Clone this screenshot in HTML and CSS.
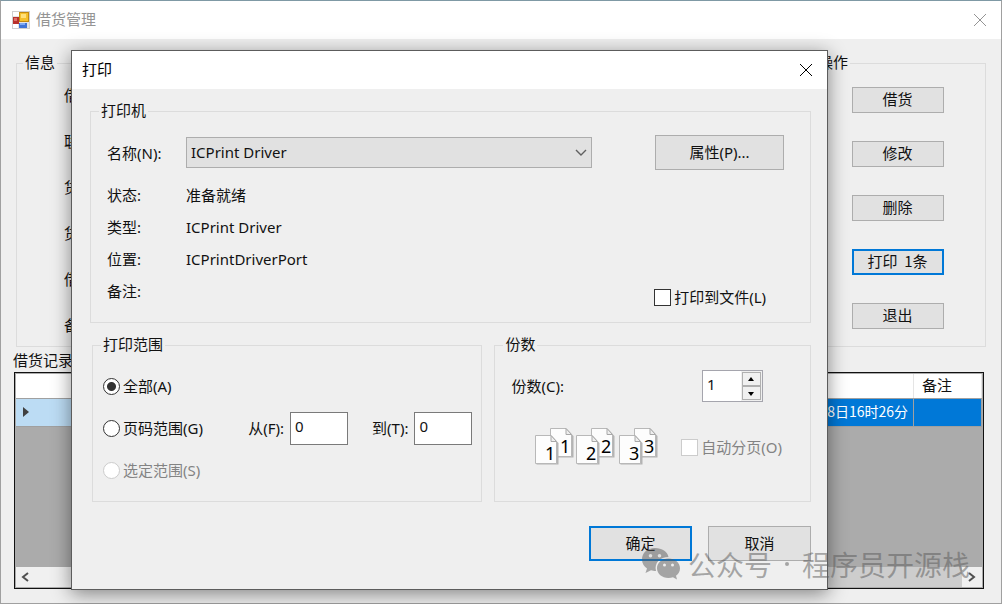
FILE: index.html
```html
<!DOCTYPE html>
<html lang="zh-CN">
<head>
<meta charset="utf-8">
<title>借货管理</title>
<link rel="stylesheet" href="styles.css">
</head>
<body>
<main class="window">
  <header class="titlebar titlebar-inactive">
    <svg class="app-icon" width="18" height="18" viewBox="0 0 18 18" aria-hidden="true">
      <rect x="0.5" y="0.5" width="17" height="17" fill="#e4e4e4" stroke="#cfcfcf"/>
      <rect x="1" y="1" width="6" height="4" fill="#fff"/>
      <rect x="1" y="13" width="5" height="4" fill="#fff"/>
      <rect x="1" y="6" width="6" height="7" fill="#b8302c"/>
      <rect x="2" y="7" width="3" height="3" fill="#dd7068"/>
      <rect x="7.500" y="1.500" width="9" height="9" fill="#f5c02c" stroke="#c28a10"/>
      <rect x="9" y="3" width="5" height="4" fill="#ffe07a"/>
      <rect x="7" y="12" width="8" height="5" fill="#3f74d8"/>
      <rect x="8" y="12" width="5" height="2" fill="#7fa9f2"/>
    </svg>
    <h1 class="title">借货管理</h1>
    <button class="close" type="button" aria-label="关闭窗口">
      <svg width="14" height="14" viewBox="0 0 14 14"><path d="M1 1L13 13M13 1L1 13" fill="none" stroke="currentColor"/></svg>
    </button>
  </header>
  <div class="client">
    <div class="groups">
      <fieldset class="group info">
        <legend>信息</legend>
        <div class="info-list">
          <span>借</span><span>联</span><span>货</span><span>货</span><span>借</span><span>备</span>
        </div>
      </fieldset>
      <fieldset class="group actions">
        <legend>操作</legend>
        <div class="action-list">
          <button class="btn btn-small" type="button">借货</button>
          <button class="btn btn-small" type="button">修改</button>
          <button class="btn btn-small" type="button">删除</button>
          <button class="btn btn-small btn-default" type="button">打印&nbsp; 1条</button>
          <button class="btn btn-small" type="button">退出</button>
        </div>
      </fieldset>
    </div>
    <h2 class="records-title">借货记录</h2>
    <div class="records">
      <table class="table">
        <thead>
          <tr><th class="col-mark"></th><th></th><th class="col-note">备注</th></tr>
        </thead>
        <tbody>
          <tr>
            <td class="mark"><svg width="8" height="12" viewBox="0 0 8 12"><path d="M1 1L7 6L1 11Z" fill="#404040"/></svg></td>
            <td class="time">8日16时26分</td>
            <td></td>
          </tr>
        </tbody>
      </table>
      <div class="scrollbar">
        <button class="scroll-btn" type="button" aria-label="向左滚动"><svg width="10" height="10" viewBox="0 0 10 10"><path d="M7 1L2 5L7 9" fill="none" stroke="#505050" stroke-width="2"/></svg></button>
        <div class="scroll-track"><div class="scroll-thumb"></div></div>
        <button class="scroll-btn" type="button" aria-label="向右滚动"><svg width="10" height="10" viewBox="0 0 10 10"><path d="M2 1L7 5L2 9" fill="none" stroke="#505050" stroke-width="2"/></svg></button>
      </div>
    </div>
  </div>
</main>

<section class="dialog" role="dialog" aria-labelledby="dialog-title">
  <header class="titlebar">
    <h2 class="title" id="dialog-title">打印</h2>
    <button class="close" type="button" aria-label="关闭">
      <svg width="14" height="14" viewBox="0 0 14 14"><path d="M1 1L13 13M13 1L1 13" fill="none" stroke="currentColor"/></svg>
    </button>
  </header>
  <form class="dialog-body">
    <fieldset class="group printer">
      <legend>打印机</legend>
      <div class="printer-top">
        <label class="key" for="printer">名称(N):</label>
        <div class="select-wrap">
          <select class="select" id="printer"><option>ICPrint Driver</option></select>
          <svg class="chevron" width="12" height="8" viewBox="0 0 12 8" aria-hidden="true"><path d="M1 1L6 6L11 1" fill="none" stroke="#606060" stroke-width="1.400"/></svg>
        </div>
        <button class="btn btn-props" type="button">属性(P)...</button>
      </div>
      <div class="printer-bottom">
        <dl class="details">
          <dt>状态:</dt><dd>准备就绪</dd>
          <dt>类型:</dt><dd>ICPrint Driver</dd>
          <dt>位置:</dt><dd>ICPrintDriverPort</dd>
          <dt>备注:</dt><dd></dd>
        </dl>
        <label class="choice to-file"><input class="check" type="checkbox">打印到文件(L)</label>
      </div>
    </fieldset>
    <div class="lower">
      <fieldset class="group range">
        <legend>打印范围</legend>
        <div class="range-row">
          <label class="choice"><input class="radio" type="radio" name="range" checked>全部(A)</label>
        </div>
        <div class="range-row">
          <label class="choice"><input class="radio" type="radio" name="range">页码范围(G)</label>
          <div class="pages">
            <label class="page">从(F):<input class="field" type="text" value="0"></label>
            <label class="page">到(T):<input class="field" type="text" value="0"></label>
          </div>
        </div>
        <div class="range-row">
          <label class="choice choice-off"><input class="radio" type="radio" name="range" disabled>选定范围(S)</label>
        </div>
      </fieldset>
      <fieldset class="group copies">
        <legend>份数</legend>
        <div class="copies-row">
          <label for="copies">份数(C):</label>
          <div class="spin">
            <input class="spin-input" id="copies" type="text" value="1">
            <div class="spin-buttons">
              <button class="spin-btn" type="button" aria-label="增加"><svg width="8" height="5" viewBox="0 0 8 5"><path d="M4 0L7 4H1Z"/></svg></button>
              <button class="spin-btn" type="button" aria-label="减少"><svg width="8" height="5" viewBox="0 0 8 5"><path d="M4 5L7 1H1Z"/></svg></button>
            </div>
          </div>
        </div>
        <div class="collate-row">
          <svg class="sheets" width="124" height="38" viewBox="0 0 124 38" aria-hidden="true">
            <defs>
              <g id="sheet">
                <path d="M1.500 1.500H17L23.500 8V29.500H1.500Z" fill="#b4b4b4"/>
                <path d="M.5 .5H16L21.500 6.500V28.500H.5Z" fill="#fdfdfd" stroke="#b8b8b8"/>
                <path d="M16 .5V6.500H21.500Z" fill="#eee" stroke="#a8a8a8"/>
              </g>
            </defs>
            <g class="sheet-text">
              <use href="#sheet" x="15" y="0"/><text x="25" y="25">1</text>
              <use href="#sheet" x="0" y="7"/><text x="10" y="32">1</text>
              <use href="#sheet" x="56" y="0"/><text x="66" y="25">2</text>
              <use href="#sheet" x="41" y="7"/><text x="51" y="32">2</text>
              <use href="#sheet" x="99" y="0"/><text x="109" y="25">3</text>
              <use href="#sheet" x="84" y="7"/><text x="94" y="32">3</text>
            </g>
          </svg>
          <label class="choice choice-off"><input class="check" type="checkbox" disabled>自动分页(O)</label>
        </div>
      </fieldset>
    </div>
    <div class="buttons">
      <button class="btn btn-large btn-default" type="button">确定</button>
      <button class="btn btn-large" type="button">取消</button>
    </div>
  </form>
</section>

<div class="watermark">
  <svg width="40" height="34" viewBox="0 0 40 34" aria-hidden="true">
    <path fill="currentColor" fill-rule="evenodd" d="M14 1C6 1 1 6 1 12.500C1 16.500 3 19.500 6 21.500L4.500 26L10 23.200C11.500 23.700 13 23.900 15 23.900C13 16 19 10 27.500 10C26.500 4.500 21 1 14 1ZM9.500 7a1.800 1.800 0 1 1 0 3.600a1.800 1.800 0 0 1 0-3.600ZM18.500 7a1.800 1.800 0 1 1 0 3.600a1.800 1.800 0 0 1 0-3.600Z"/>
    <path fill="currentColor" fill-rule="evenodd" d="M27.500 11.500C21 11.500 16 15.800 16 21.200C16 26.500 21 31 27.500 31C29 31 30.500 30.700 32 30.200L36 32.500L35 28.800C37.500 27 39 24.500 39 21.200C39 15.800 34 11.500 27.500 11.500ZM23.500 16.500a1.500 1.500 0 1 1 0 3a1.500 1.500 0 0 1 0-3ZM31.500 16.500a1.500 1.500 0 1 1 0 3a1.500 1.500 0 0 1 0-3Z"/>
  </svg>
  <span>公众号</span><span class="dot"></span><span>程序员开源栈</span>
</div>
</body>
</html>
```
FILE: styles.css
```css
* {
  box-sizing: border-box;
}

body {
  margin: 0;
  position: relative;
  min-height: 100vh;
  color: #111;
  background: #efefef;
  font: 15px/20px "Noto Sans", "Noto Sans CJK SC", sans-serif;
}

h1, h2, dl, dd, fieldset, legend {
  margin: 0;
  padding: 0;
  font-size: 15px;
  font-weight: 400;
}

button, input, select {
  margin: 0;
  padding: 0;
  color: inherit;
  font: inherit;
}

/* Main window */
.window {
  display: flex;
  flex-direction: column;
  min-height: 100vh;
  border: 1px solid #a0a0a0;
  border-top-color: #7f99a5;
  font-family: "Noto Sans CJK SC", sans-serif;
}

.titlebar {
  display: flex;
  align-items: center;
  height: 38px;
  padding: 0 14px 0 10px;
  background: #fff;
  color: #000;
}

.title {
  padding-bottom: 2px;
}

.titlebar-inactive {
  gap: 6px;
  padding-left: 11px;
  color: #949494;
}

.close {
  display: flex;
  margin-left: auto;
  border: 0;
  background: none;
}

.client {
  display: flex;
  flex: 1;
  flex-direction: column;
  padding: 14px 17px 14px 13px;
}

.groups {
  display: flex;
  gap: 9px;
  padding-left: 2px;
  margin-right: -2px;
}

.group {
  min-width: 0;
  border: 1px solid #dcdcdc;
}

.group > legend {
  margin-left: 6px;
  padding: 0 2px 2px;
  line-height: 18px;
}

.info {
  flex: 1;
}

.info-list {
  display: flex;
  flex-direction: column;
  gap: 26px;
  padding: 12px 0 11px 47px;
}

.actions {
  width: 177px;
}

.action-list {
  display: flex;
  flex-direction: column;
  align-items: center;
  gap: 28px;
  padding: 14px 0 17px;
}

.btn {
  padding-bottom: 2px;
  border: 1px solid #adadad;
  background: #e1e1e1;
}

.btn-small {
  width: 92px;
  height: 26px;
  line-height: 22px;
}

.btn-default {
  border: 2px solid #0078d7;
}

.btn-small.btn-default {
  line-height: 20px;
}

.records-title {
  margin: 3px 0 2px -1px;
}

.records {
  display: flex;
  flex: 1;
  flex-direction: column;
  padding: 1px;
  border: 1px solid #111;
  background: #ababab;
}

.table {
  width: 100%;
  border-collapse: collapse;
  table-layout: fixed;
}

.table th {
  height: 24px;
  padding: 0 8px 2px;
  border-right: 1px solid #e5e5e5;
  border-bottom: 1px solid #a0a0a0;
  background: #fff;
  font-weight: 400;
  line-height: 20px;
  text-align: left;
}

.table td {
  height: 28px;
  padding: 0 5px 2px;
  border-right: 1px solid #a0a0a0;
  border-bottom: 1px solid #a0a0a0;
  background: #0078d7;
  color: #fff;
}

.table .col-mark {
  width: 62px;
}

.table .col-note {
  width: 68px;
}

.table .mark {
  padding: 0 6px;
  background: #bcdcf4;
}

.mark svg {
  display: block;
}

.table .time {
  font-size: 14px;
  text-align: right;
}

.scrollbar {
  display: flex;
  height: 20px;
  margin-top: auto;
  background: #f0f0f0;
}

.scroll-btn {
  display: flex;
  align-items: center;
  justify-content: center;
  width: 20px;
  border: 0;
  background: none;
}

.scroll-track {
  display: flex;
  flex: 1;
  justify-content: flex-end;
}

.scroll-thumb {
  width: 60%;
  background: #cdcdcd;
}

/* Print dialog */
.dialog {
  position: absolute;
  top: 50px;
  right: 174px;
  left: 71px;
  border: 1px solid #5c5c5c;
  background: #efefef;
  box-shadow: 0 4px 18px rgba(0, 0, 0, 0.45);
}

.dialog-body {
  padding: 12px 16px 28px 18px;
}

.printer > legend {
  margin-left: 8px;
}

.printer-top {
  display: flex;
  align-items: center;
  padding: 14px 26px 0 16px;
}

.key {
  width: 79px;
}

.select-wrap {
  position: relative;
  flex: 1;
}

.select {
  display: block;
  width: 100%;
  height: 31px;
  padding: 0 28px 1px 4px;
  border: 1px solid #adadad;
  border-radius: 0;
  background: #e1e1e1;
  appearance: none;
}

.chevron {
  position: absolute;
  top: 12px;
  right: 5px;
  pointer-events: none;
}

.btn-props {
  width: 129px;
  height: 35px;
  margin-left: 63px;
}

.printer-bottom {
  display: flex;
  align-items: flex-end;
  justify-content: space-between;
  padding: 9px 44px 15px 16px;
}

.details {
  display: grid;
  grid-template-columns: 79px auto;
  grid-auto-rows: 32px;
  align-items: center;
}

.choice {
  display: flex;
  align-items: center;
  gap: 3px;
}

.choice-off {
  color: #838383;
}

.radio, .check {
  width: 17px;
  height: 17px;
  border: 1px solid #333;
  background: #fff;
  appearance: none;
}

.radio {
  border-radius: 50%;
}

.radio:checked {
  background: radial-gradient(circle, #333 0 4px, #fff 5px);
}

.radio:disabled, .check:disabled {
  border-color: #ccc;
}

.lower {
  display: grid;
  grid-template-columns: 391fr 317fr;
  gap: 12px;
  margin-top: 12px;
  padding-left: 2px;
}

.range {
  padding: 10px 9px 10px 10px;
}

.range > legend {
  margin-left: -2px;
}

.range-row {
  display: flex;
  align-items: center;
  justify-content: space-between;
  height: 42px;
}

.pages {
  display: flex;
  gap: 24px;
}

.page {
  display: flex;
  align-items: center;
  gap: 6px;
}

.field {
  width: 58px;
  height: 33px;
  padding: 0 4px 4px;
  border: 1px solid #7a7a7a;
  background: #fff;
}

.copies {
  padding: 10px 0;
}

.copies > legend {
  margin-left: 8px;
}

.copies-row, .collate-row {
  display: flex;
  align-items: center;
  justify-content: space-between;
}

.copies-row {
  height: 42px;
  padding: 0 47px 0 16px;
}

.collate-row {
  margin-top: 21px;
  padding: 0 28px 0 40px;
}

.spin {
  display: flex;
  width: 61px;
  height: 32px;
  border: 1px solid #a5a5ad;
  background: #efefef;
}

.spin-input {
  flex: 1;
  min-width: 0;
  padding: 0 4px 4px;
  border: 0;
  background: #fff;
}

.spin-buttons {
  display: flex;
  flex-direction: column;
  width: 21px;
  padding: 1px;
}

.spin-btn {
  display: flex;
  flex: 1;
  align-items: center;
  justify-content: center;
  border: 1px solid #b0b0b0;
  background: #f0f0f0;
}

.sheets {
  display: block;
}

.sheet-text {
  font-family: "Noto Sans", sans-serif;
  font-size: 18px;
}

.buttons {
  display: flex;
  justify-content: flex-end;
  gap: 16px;
  margin-top: 24px;
}

.btn-large {
  width: 103px;
  height: 35px;
}

/* Watermark */
.watermark {
  position: absolute;
  right: 32px;
  bottom: 20px;
  display: flex;
  align-items: center;
  color: rgba(90, 90, 90, 0.5);
  font: 400 28px/40px "Noto Sans CJK SC", sans-serif;
  pointer-events: none;
}

.watermark svg {
  margin-right: 7px;
}

.dot {
  width: 4px;
  height: 4px;
  margin: 0 13px;
  border-radius: 50%;
  background: currentColor;
}
```
